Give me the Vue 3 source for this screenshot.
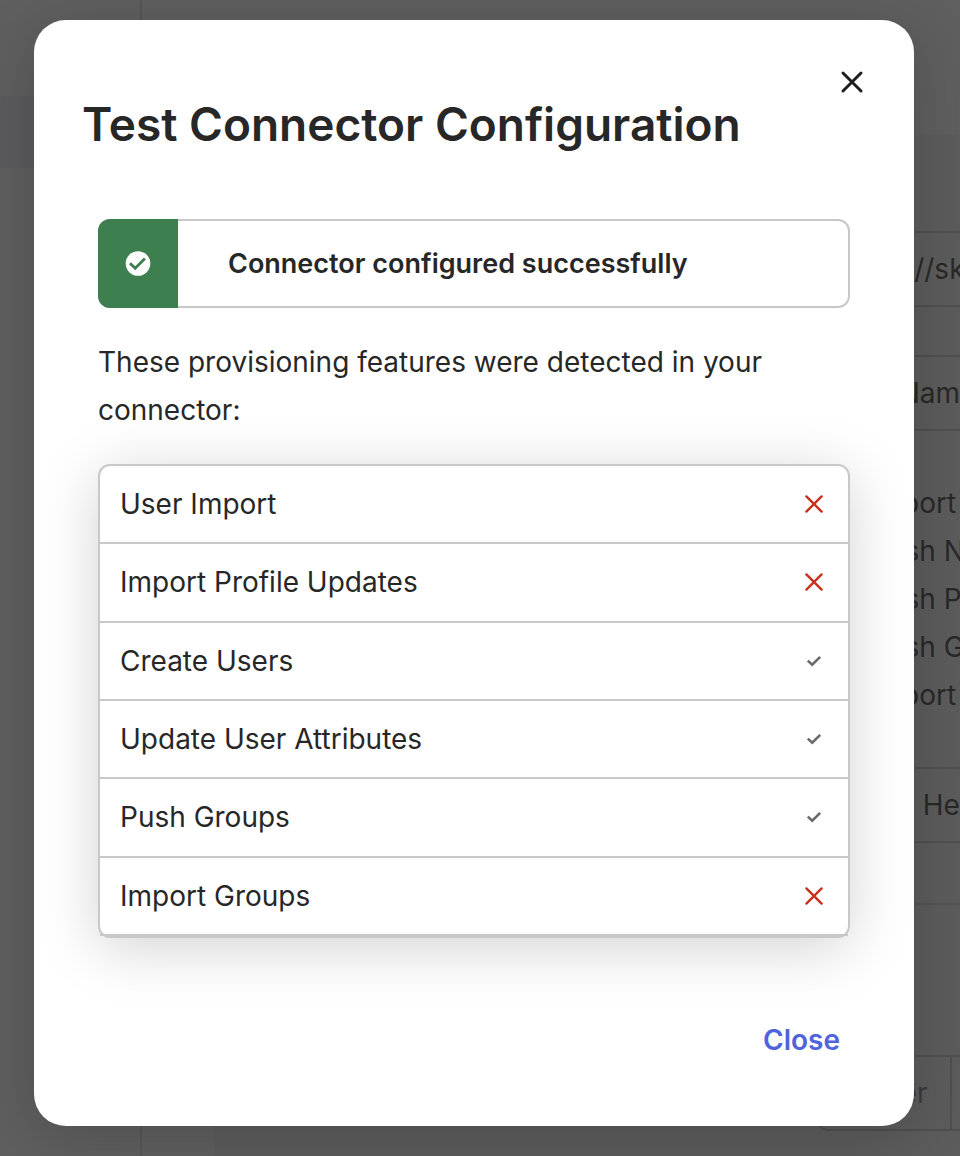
<script setup>
import { ref } from 'vue'

const open = ref(true)

const features = [
  { name: 'User Import', detected: false },
  { name: 'Import Profile Updates', detected: false },
  { name: 'Create Users', detected: true },
  { name: 'Update User Attributes', detected: true },
  { name: 'Push Groups', detected: true },
  { name: 'Import Groups', detected: false }
]

const actions = [
  'Import',
  'Push New',
  'Push Profile',
  'Push Groups',
  'Import'
]

function close () {
  open.value = false
}

</script>

<template>
  <div class="app">

    <div class="page" :inert="open">
      <nav class="sidebar">
        <div class="sidebar-active"></div>
      </nav>
      <main class="content">
        <form class="form" @submit.prevent>
          <input class="field" type="text" value="https://sk" aria-label="Base URL">
          <input class="field" type="text" value="userName" aria-label="Unique identifier">
          <div class="actions">
            <label v-for="(action, i) in actions" :key="i" class="action">
              <input type="checkbox" checked>
              {{ action }}
            </label>
          </div>
          <select class="field" aria-label="Authentication mode">
            <option>HTTP Header</option>
          </select>
          <div class="divider"></div>
          <div class="token">
            <span class="prefix">Bearer</span>
            <input type="text" aria-label="Token">
          </div>
        </form>
      </main>
    </div>

    <div v-if="open" class="overlay">
      <section class="modal" role="dialog" aria-modal="true" aria-labelledby="modal-title">

        <header class="modal-header">
          <h1 id="modal-title">Test Connector Configuration</h1>
          <button class="dismiss" type="button" aria-label="Close dialog" @click="close">
            <svg width="24" height="24" viewBox="0 0 24 24" fill="none" stroke="currentColor" stroke-width="3" stroke-linecap="round">
              <path d="M3 3L21 21M21 3L3 21" />
            </svg>
          </button>
        </header>

        <div class="modal-body">
          <div class="alert" role="status">
            <div class="alert-icon">
              <svg width="26" height="26" viewBox="0 0 26 26" fill="none">
                <circle cx="13" cy="12.5" r="12.3" fill="#fff" />
                <path d="M5 12.2L10.2 17.2L19.9 7.6" stroke="#3d7f4f" stroke-width="2.8" />
              </svg>
            </div>
            <strong class="alert-text">Connector configured successfully</strong>
          </div>

          <p>These provisioning features were detected in your connector:</p>

          <ul class="features">
            <li v-for="feature in features" :key="feature.name">
              <span>{{ feature.name }}</span>
              <svg v-if="feature.detected" class="yes" width="20" height="20" viewBox="0 0 20 20" fill="none" stroke="currentColor" stroke-width="2.6" role="img" aria-label="Detected">
                <path d="M3.8 9.6L8.2 13.6L16.2 5.9" />
              </svg>
              <svg v-else class="no" width="20" height="20" viewBox="0 0 20 20" fill="none" stroke="currentColor" stroke-width="2.4" stroke-linecap="round" role="img" aria-label="Not detected">
                <path d="M2.4 2.4L17.6 17.6M17.6 2.4L2.4 17.6" />
              </svg>
            </li>
          </ul>
        </div>

        <footer class="modal-footer">
          <button class="close" type="button" @click="close">Close</button>
        </footer>

      </section>
    </div>

  </div>
</template>

<style>
body {
  margin: 0;
}
</style>

<style scoped>
.app {
  display: grid;
  grid-template-columns: minmax(0, 1fr);
  min-height: 100vh;
  overflow: hidden;
  font-family: Inter, "Liberation Sans", sans-serif;
  font-size: 28px;
  line-height: 48px;
  color: #272727;
}

/* page and overlay share one grid cell */
.page, .overlay {
  grid-area: 1 / 1;
}

.page {
  display: flex;
  overflow: hidden;
  background-color: #fff;
}

.sidebar {
  flex: none;
  width: 140px;
  padding-top: 96px;
  border-right: 2px solid #dcdcdc;
}

.sidebar-active {
  height: 72px;
  background-color: #f0f0fa;
}

.content {
  flex: 1 0 auto;
  margin: 135px 0 0 72px;
  padding: 96px 0 0 602px;
  background-color: #f4f4f4;
}

.form {
  display: flex;
  flex-direction: column;
  gap: 48px;
  width: 480px;
}

.field {
  box-sizing: border-box;
  width: 100%;
  height: 76px;
  padding: 0 22px;
  border: 2px solid #bfbfbf;
  border-radius: 12px;
  background: none;
  appearance: none;
  font: inherit;
  color: inherit;
}

.actions {
  display: flex;
  flex-direction: column;
}

.action {
  display: flex;
  align-items: center;
  gap: 16px;
  padding-left: 14px;
}

.action input {
  width: 24px;
  height: 24px;
  margin: 0;
}

.divider {
  margin: 12px 0 102px;
  border-top: 2px solid #d4d4d4;
}

.token {
  display: flex;
  height: 72px;
  border: 2px solid #bfbfbf;
  border-radius: 12px;
}

.prefix {
  width: 110px;
  padding-left: 22px;
  border-right: 2px solid #bfbfbf;
  line-height: 72px;
  color: #6e6e6e;
}

.token input {
  flex: 1;
  min-width: 0;
  border: 0;
  background: none;
}

.overlay {
  position: relative;
  padding: 20px 46px 30px 34px;
  background-color: rgba(41,41,41,.75);
}

.modal {
  border-radius: 32px;
  background-color: #fff;
  box-shadow: 0 10px 60px rgba(0,0,0,.18);
}

.modal-header {
  display: flex;
  align-items: flex-start;
  justify-content: space-between;
  padding: 40px 40px 0 48px;
}

h1 {
  margin: 34px 0 0;
  font-size: 46px;
  font-weight: 600;
  line-height: 60px;
}

button {
  border: 0;
  background: none;
  font: inherit;
  cursor: pointer;
}

.dismiss {
  display: flex;
  align-items: center;
  justify-content: center;
  width: 44px;
  height: 44px;
  padding: 0;
  color: #1d1d21;
}

.modal-body {
  padding: 65px 64px 0;
}

.alert {
  display: flex;
  align-items: center;
  min-height: 89px;
  border-radius: 12px;
  box-shadow: inset 0 0 0 2px #c8c8c8;
}

.alert-icon {
  display: flex;
  align-items: center;
  justify-content: center;
  align-self: stretch;
  width: 80px;
  border-radius: 12px 0 0 12px;
  background-color: #3d7f4f;
}

.alert-text {
  padding-left: 50px;
  font-size: 27px;
  font-weight: 600;
}

p {
  margin: 30px 0;
}

.features {
  display: flex;
  flex-direction: column;
  box-sizing: border-box;
  min-height: 474px;
  margin: 0;
  padding: 0;
  border: 2px solid #c8c8c8;
  border-radius: 12px;
  background-color: #fff;
  box-shadow: 0 10px 60px rgba(0,0,0,.18);
  list-style: none;
}

li {
  display: flex;
  flex: 1;
  align-items: center;
  justify-content: space-between;
  padding: 0 24px 0 20px;
  border-bottom: 2px solid #c8c8c8;
}

.yes {
  color: #6a6a6a;
}

.no {
  color: #c9301b;
}

.modal-footer {
  display: flex;
  justify-content: flex-end;
  padding: 78px 64px 62px;
}

.close {
  padding: 0 10px;
  font-weight: 600;
  color: #4f64dc;
}
</style>
